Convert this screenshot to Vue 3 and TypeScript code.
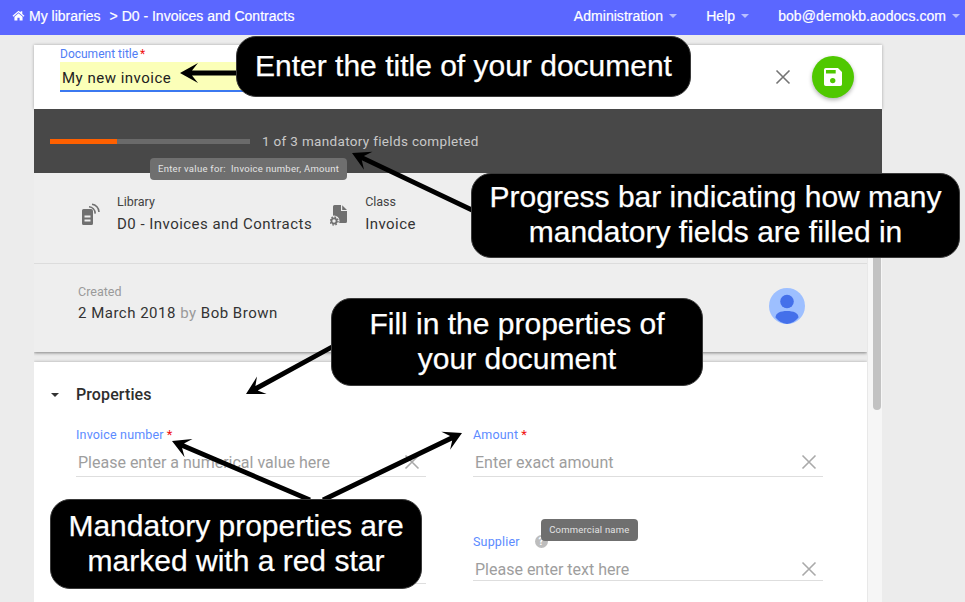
<template>
  <div class="page">
    <header class="navbar">
      <div class="crumbs">
        <svg class="home" viewBox="0 0 24 24"><path d="M12 3 1 12.6l1.4 1.6L12 5.900l9.600 8.300 1.400-1.600-4-3.500V4h-3v2.100zM4.500 14.500V21h5.500v-5h4v5h5.500v-6.500L12 8z" /></svg>
        <span>My libraries</span>
        <span class="sep">&gt; D0 - Invoices and Contracts</span>
      </div>
      <nav class="menu">
        <span v-for="item in menu" :key="item" class="menu-item">{{ item }}<i class="caret"></i></span>
      </nav>
    </header>

    <main class="content">
      <section class="title-card">
        <div class="title-field">
          <label>Document title<b>*</b></label>
          <div class="title-input">My new invoice</div>
        </div>
        <svg class="close title-close" viewBox="0 0 16 16"><path d="M1.500 1.500l13 13M14.500 1.500l-13 13" /></svg>
        <button class="save">
          <svg viewBox="0 0 20 20"><path fill-rule="evenodd" d="M2 0h13.500L20 4.500V18a2 2 0 0 1-2 2H2a2 2 0 0 1-2-2V2a2 2 0 0 1 2-2zm.2 2.200V6H13V2.200zM9.700 11a3 3 0 1 0 0 6 3 3 0 0 0 0-6z" /></svg>
        </button>
      </section>

      <section class="progress-card">
        <div class="track"><div class="fill" :style="{ width: (filled / total) * 100 + '%' }"></div></div>
        <span class="progress-text">{{ filled }} of {{ total }} mandatory fields completed</span>
        <div class="tip progress-tip">Enter value for:&nbsp; Invoice number, Amount</div>
      </section>

      <div class="scroller">
        <div class="cards">
          <section class="info-card">
            <div class="info-row">
              <div class="info-item library">
                <svg class="info-icon" viewBox="0 0 20 24">
                  <path fill-rule="evenodd" d="M3.500 6h7.500a2 2 0 0 1 2 2v12.500a1.500 1.500 0 0 1-1.500 1.500h-8A1.500 1.500 0 0 1 2 20.500v-13A1.500 1.500 0 0 1 3.500 6zM4.500 12.500v2h6v-2zm0 4v2h6v-2z" />
                  <path d="M9 3.800c3.400.3 6 3 6.200 6.800M12 1.200c3.800.4 7 3.600 7 7.800" fill="none" stroke="#707070" stroke-width="1.600" />
                </svg>
                <div>
                  <div class="info-label">Library</div>
                  <div class="info-value">D0 - Invoices and Contracts</div>
                </div>
              </div>
              <div class="info-item">
                <svg class="info-icon class-icon" viewBox="0 0 20 24">
                  <path d="M4.500 2h6.500v6h6v10.500a1.500 1.500 0 0 1-1.500 1.500H4.500A1.500 1.500 0 0 1 3 18.500v-15A1.500 1.500 0 0 1 4.500 2zM12.200 2.200 17 7h-4.800z" />
                  <circle cx="4" cy="18" r="5.500" fill="#eeeeee" />
                  <circle cx="4" cy="18" r="2.600" fill="none" stroke="#707070" stroke-width="1.800" />
                  <circle cx="4" cy="18" r="4" fill="none" stroke="#707070" stroke-width="1.400" stroke-dasharray="1.600 1.540" />
                </svg>
                <div>
                  <div class="info-label">Class</div>
                  <div class="info-value">Invoice</div>
                </div>
              </div>
            </div>
            <div class="created-row">
              <div>
                <div class="info-label muted">Created</div>
                <div class="info-value">2 March 2018 <span class="by">by</span> Bob Brown</div>
              </div>
              <svg class="avatar" viewBox="0 0 36 36">
                <circle cx="18" cy="18" r="18" fill="#9dbfff" />
                <circle cx="18" cy="13.500" r="6.800" fill="#4470ea" />
                <path d="M6.500 29.500C6.500 25 11.500 23 18 23s11.500 2 11.500 6.500A18 18 0 0 1 18 36 18 18 0 0 1 6.500 29.500z" fill="#4470ea" />
              </svg>
            </div>
          </section>

          <section class="props-card">
            <div class="props-head"><i class="props-caret"></i><h2>Properties</h2></div>
            <div class="props-grid">
              <div v-for="(field, i) in fields" :key="i" class="field">
                <div class="field-label">
                  {{ field.label }}<b v-if="field.required">*</b>
                  <span v-if="field.hint" class="hint">
                    <i class="hint-dot">?</i>
                    <span class="tip hint-tip">{{ field.hint }}</span>
                  </span>
                </div>
                <div class="field-input" :class="{ short: field.hint }">
                  <span>{{ field.placeholder }}</span>
                  <svg v-if="field.placeholder" class="close" viewBox="0 0 16 16"><path d="M1.500 1.500l13 13M14.500 1.500l-13 13" /></svg>
                </div>
              </div>
            </div>
          </section>
        </div>
        <div class="scrollbar"><div class="thumb"></div></div>
      </div>
    </main>

    <svg class="arrows" viewBox="0 0 965 602">
      <path v-for="a in arrows" :key="a" :d="a" />
    </svg>

    <div v-for="c in callouts" :key="c.id" class="callout" :class="c.id">
      <span v-for="line in c.lines" :key="line">{{ line }}</span>
    </div>
  </div>
</template>

<script setup lang="ts">
interface Field {
  label: string
  placeholder: string
  required?: boolean
  hint?: string
}

const filled = 1
const total = 3

const menu = ['Administration', 'Help', 'bob@demokb.aodocs.com']

const fields: Field[] = [
  { label: 'Invoice number', placeholder: 'Please enter a numerical value here', required: true },
  { label: 'Amount', placeholder: 'Enter exact amount', required: true },
  // this one sits under the callout, only its underline shows
  { label: '', placeholder: '' },
  { label: 'Supplier', placeholder: 'Please enter text here', hint: 'Commercial name' }
]

// shaft plus a notched head, from tail to tip
const arrow = (x1: number, y1: number, x2: number, y2: number) => {
  const len = Math.hypot(x2 - x1, y2 - y1)
  const ux = (x2 - x1) / len
  const uy = (y2 - y1) / len
  const at = (back: number, side: number) =>
    `${(x2 - ux * back - uy * side).toFixed(1)} ${(y2 - uy * back + ux * side).toFixed(1)}`
  const w = 2.4
  return (
    `M${at(len, -w)}L${at(12, -w)}L${at(18, -10)}L${x2} ${y2}` +
    `L${at(18, 10)}L${at(12, w)}L${at(len, w)}Z`
  )
}

const arrows = [
  arrow(240, 73, 180, 73),
  arrow(472, 210, 352, 153),
  arrow(332, 347, 246, 394),
  arrow(310, 500, 172, 441),
  arrow(323, 500, 462, 433)
]

const callouts = [
  { id: 'c-title', lines: ['Enter the title of your document'] },
  { id: 'c-progress', lines: ['Progress bar indicating how many', 'mandatory fields are filled in'] },
  { id: 'c-props', lines: ['Fill in the properties of', 'your document'] },
  { id: 'c-star', lines: ['Mandatory properties are', 'marked with a red star'] }
]
</script>

<style>
html,
body {
  margin: 0;
  height: 100%;
  overflow: hidden;
  background: #ececec;
}
</style>

<style scoped>
.page {
  position: relative;
  width: 965px;
  height: 602px;
  overflow: hidden;
  background: #ececec;
  font-family: Roboto, "Noto Sans", sans-serif;
  color: #212121;
}

.navbar {
  height: 35px;
  background: #5b67ff;
  color: #fff;
  display: flex;
  justify-content: space-between;
  align-items: center;
  padding: 0 5px 4px 12px;
  box-sizing: border-box;
  font: 14px "Liberation Sans", Arial, sans-serif;
  -webkit-text-stroke: .2px #fff;
}
.crumbs {
  display: flex;
  align-items: center;
}
.home {
  width: 13px;
  height: 13px;
  fill: #fff;
  margin-right: 4px;
}
.sep {
  margin-left: 9px;
}
.menu {
  display: flex;
  letter-spacing: .05px;
}
.menu-item {
  margin-left: 29px;
  display: flex;
  align-items: center;
}
.caret {
  margin-left: 6px;
  border: 4px solid transparent;
  border-top-color: #b9bfff;
  border-bottom: 0;
}

.content {
  width: 848px;
  margin: 10px 0 0 34px;
}

.title-card {
  height: 64px;
  background: #fff;
  display: flex;
  align-items: center;
  box-shadow: 0 0 3px rgba(0, 0, 0, .3);
  box-sizing: border-box;
  padding: 0 28px 0 26px;
}
.title-field {
  width: 400px;
  margin-right: auto;
  align-self: flex-start;
  padding-top: 2px;
}
.title-field label {
  display: block;
  font-size: 12px;
  line-height: 15px;
  color: #4f7df5;
}
.title-field label b,
.field-label b {
  color: #f01010;
  font-weight: 400;
  margin-left: 2px;
}
.title-input {
  height: 28px;
  line-height: 32px;
  background: #fbffb8;
  border-bottom: 2px solid #3b78f0;
  font-size: 15px;
  letter-spacing: .5px;
  padding-left: 2px;
}
.close {
  width: 16px;
  height: 16px;
  fill: none;
  stroke: #aaa;
  stroke-width: 1.600;
  flex: none;
}
.title-close {
  stroke: #757575;
  margin-right: 21px;
}
.save {
  width: 42px;
  height: 42px;
  border: 0;
  padding: 0;
  border-radius: 50%;
  background: #4fc800;
  box-shadow: 0 2px 4px rgba(0, 0, 0, .3);
  display: flex;
  align-items: center;
  justify-content: center;
}
.save svg {
  width: 18px;
  height: 18px;
  fill: #fff;
}

.progress-card {
  position: relative;
  height: 64px;
  background: #484848;
  display: flex;
  align-items: center;
  padding-left: 16px;
  box-sizing: border-box;
}
.track {
  width: 200px;
  height: 5px;
  background: #6a6a6a;
}
.fill {
  height: 100%;
  background: #ff6000;
}
.progress-text {
  margin-left: 12px;
  font-size: 13.500px;
  letter-spacing: .33px;
  color: #c8c8c8;
}
.tip {
  position: absolute;
  background: #6f6f6f;
  color: #e4e4e4;
  border-radius: 4px;
  white-space: nowrap;
}
.progress-tip {
  left: 116px;
  top: 49px;
  height: 22px;
  line-height: 22px;
  padding: 0 7.500px 0 8px;
  font-size: 9.500px;
  letter-spacing: .28px;
  z-index: 2;
}

.scroller {
  display: flex;
  height: 429px;
  overflow: hidden;
}
.cards {
  width: 833px;
  flex: none;
}
.scrollbar {
  width: 15px;
  background: #f6f6f6;
  border-left: 1px solid #e8e8e8;
  box-sizing: border-box;
  padding: 0 1px 0 5px;
}
.thumb {
  height: 237px;
  background: #c2c2c2;
  border-radius: 0 0 4px 4px;
}

.info-card {
  height: 179px;
  background: #eeeeee;
  box-shadow: 0 1px 3px rgba(0, 0, 0, .45);
}
.info-row {
  height: 91px;
  display: flex;
  box-sizing: border-box;
  padding: 22px 0 0 46px;
  border-bottom: 1px solid #dcdcdc;
}
.info-item {
  display: flex;
  margin-right: 18px;
}
.info-icon {
  width: 20px;
  height: 24px;
  margin: 8px 17px 0 0;
  fill: #707070;
}
.class-icon {
  margin-right: 15px;
}
.info-label {
  font-size: 12.500px;
  line-height: 14px;
  color: #424242;
}
.info-value {
  font-size: 15px;
  line-height: 18px;
  margin-top: 6px;
  letter-spacing: .47px;
  color: #333;
}
.created-row .info-value {
  margin-top: 5px;
  letter-spacing: .5px;
}
.muted,
.by {
  color: #9a9a9a;
}
.created-row {
  height: 88px;
  box-sizing: border-box;
  padding: 21px 62px 0 44px;
  display: flex;
  justify-content: space-between;
}
.avatar {
  width: 36px;
  height: 36px;
  margin-top: 3px;
}

.props-card {
  height: 250px;
  margin-top: 10px;
  background: #fff;
  box-shadow: 0 0 3px rgba(0, 0, 0, .3);
  padding: 0 42px;
  box-sizing: border-box;
}
.props-head {
  height: 66px;
  position: relative;
  display: flex;
  align-items: center;
}
.props-caret {
  position: absolute;
  left: -25px;
  top: 31px;
  border: 4px solid transparent;
  border-top-color: #333;
  border-bottom: 0;
}
.props-head h2 {
  margin: 0 0 1px;
  font-size: 16px;
  font-weight: 500;
  letter-spacing: .1px;
  color: #2e2e2e;
}
.props-grid {
  display: grid;
  grid-template-columns: 350px 350px;
  column-gap: 47px;
  row-gap: 58px;
}
.field-label {
  height: 14px;
  font-size: 12.500px;
  line-height: 14px;
  color: #5c8bff;
  display: flex;
  align-items: center;
  letter-spacing: .17px;
}
.field-label b {
  font-size: 13px;
  margin-left: 3px;
}
.hint {
  position: relative;
  margin: 0 0 2px 15px;
}
.hint-dot {
  display: block;
  width: 13px;
  height: 13px;
  border-radius: 50%;
  background: #bdbdbd;
  color: #fff;
  font: 700 10px/13px Roboto, sans-serif;
  text-align: center;
}
.hint-tip {
  left: 6.500px;
  top: -15.500px;
  height: 22px;
  line-height: 21px;
  padding: 0 8px;
  font-size: 9.500px;
  letter-spacing: .2px;
}
.field-input {
  height: 35px;
  border-bottom: 1px solid #dedede;
  display: flex;
  align-items: center;
  justify-content: space-between;
  box-sizing: border-box;
  padding: 6px 6px 0 2px;
  font-size: 16px;
  color: #9e9e9e;
}
.field-input.short {
  height: 32px;
  padding-top: 9px;
}

.arrows {
  position: absolute;
  inset: 0;
  width: 965px;
  height: 602px;
  fill: #000;
}

.callout {
  position: absolute;
  box-sizing: border-box;
  display: flex;
  flex-direction: column;
  align-items: center;
  justify-content: center;
  background: #000;
  color: #fff;
  border: 1px solid #3a3a3a;
  border-radius: 20px;
  font: 30px/35px "Liberation Sans", Arial, sans-serif;
  -webkit-text-stroke: .25px #fff;
  white-space: nowrap;
}
.c-title {
  left: 236px;
  top: 36px;
  width: 455px;
  height: 61px;
  padding-bottom: 2px;
}
.c-progress {
  left: 471px;
  top: 173px;
  width: 489px;
  height: 85px;
  padding-bottom: 3px;
}
.c-props {
  left: 331px;
  top: 298px;
  width: 372px;
  height: 88px;
  padding-bottom: 2px;
}
.c-star {
  left: 50px;
  top: 499px;
  width: 372px;
  height: 90px;
  padding-bottom: 2px;
}
</style>
